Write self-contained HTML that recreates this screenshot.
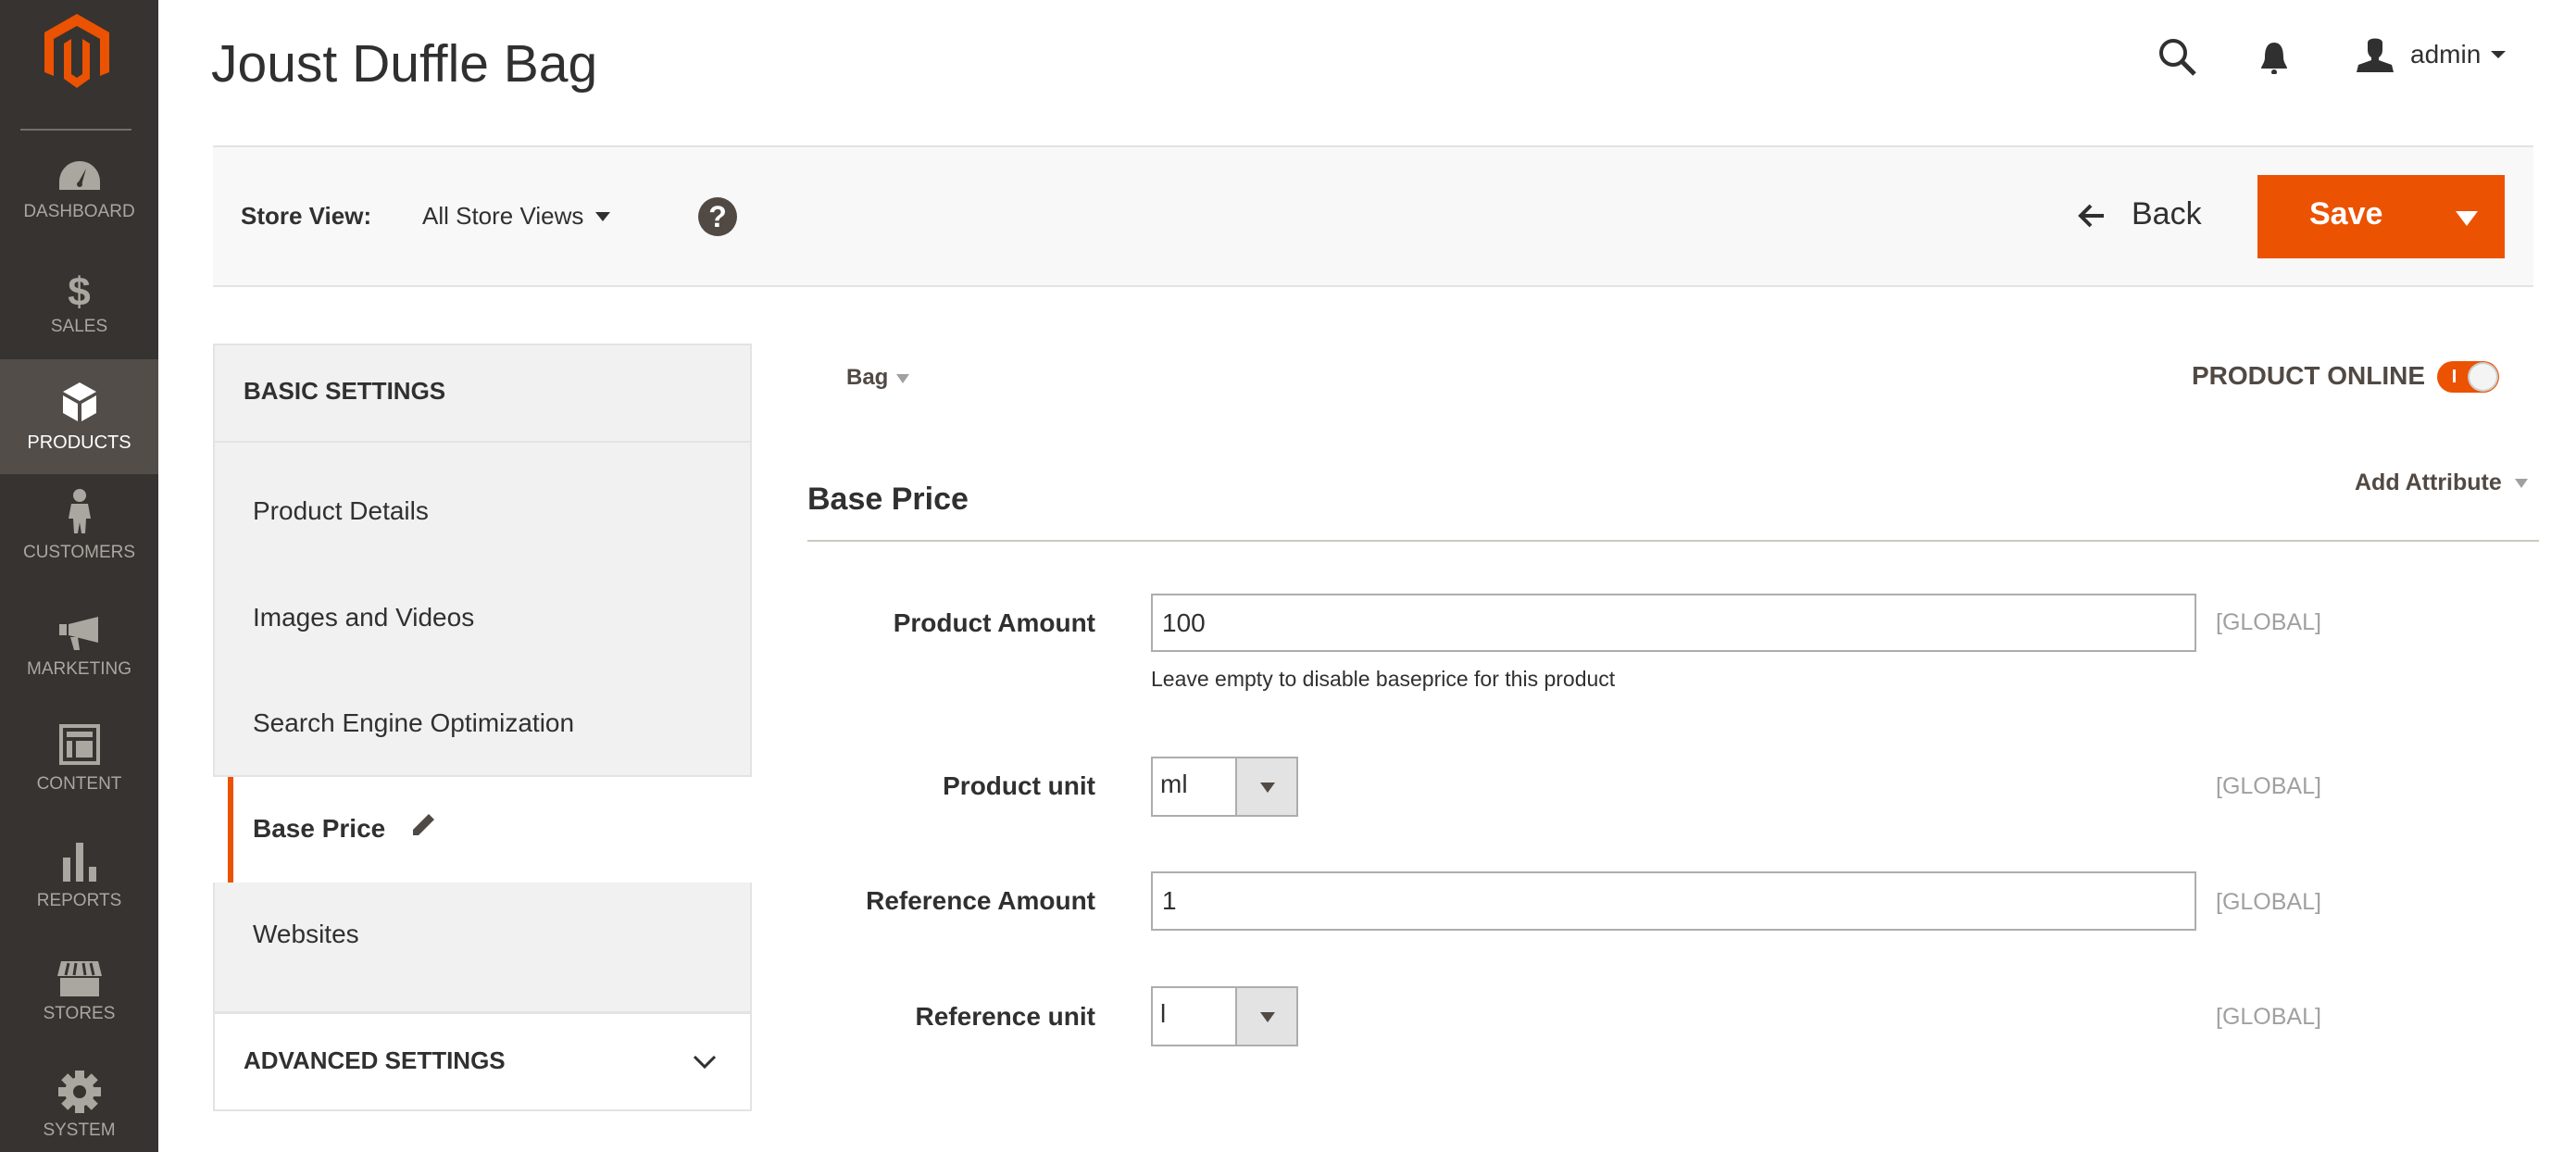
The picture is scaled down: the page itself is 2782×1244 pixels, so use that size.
<!DOCTYPE html>
<html><head><meta charset="utf-8"><style>
*{margin:0;padding:0;box-sizing:border-box}
body{width:2782px;height:1244px;background:#fff;font-family:"Liberation Sans",sans-serif;color:#303030;position:relative;overflow:hidden}
.a{position:absolute;white-space:nowrap}
#side{position:absolute;left:0;top:0;width:171px;height:1244px;background:#373330}
.nav{position:absolute;left:0;width:171px;text-align:center;color:#aaa6a0;font-size:19px}
.nav svg{display:block;margin:0 auto}
.lbl{font-weight:bold;font-size:28px;color:#303030;text-align:right;width:400px}
.inp{position:absolute;border:2px solid #adadad;background:#fff;font-size:28px;color:#303030;padding-left:10px;display:flex;align-items:center}
.glob{color:#a0a0a0;font-size:25px}
.sel{position:absolute;width:159px;height:65px;border:2px solid #adadad;background:#fff}
.sel .v{position:absolute;left:8px;top:12px;font-size:28px}
.sel .b{position:absolute;left:89px;top:0;width:66px;height:61px;background:#e3e3e3;border-left:2px solid #adadad}
.sel .b:after{content:"";position:absolute;left:25px;top:26px;border-left:8px solid transparent;border-right:8px solid transparent;border-top:11px solid #514943}
.item{position:absolute;left:273px;font-size:28px;color:#303030}
</style></head><body>
<div id="side">
<svg class="a" style="left:0;top:0" width="171" height="110" viewBox="0 0 171 110"><path d="M48,35 L83,15 L118,35 L118,78 L108,82 L108,42 L83,28 L58,42 L58,82 L48,78 Z" fill="#eb5202"/><path d="M69,47 L77,42 L77,80 L83,84 L89,80 L89,42 L97,47 L97,85 L83,95 L69,85 Z" fill="#eb5202"/></svg>
<div class="a" style="left:22px;top:139px;width:120px;height:2px;background:#736e69"></div>
<div class="nav" style="top:174px"><svg width="44" height="32" viewBox="0 0 44 32"><path d="M0,31 L0,22 A22,22 0 0 1 44,22 L44,31 Z" fill="#aaa6a0"/><path d="M20,24 L29,8 L24,26 Z" fill="#373330"/><circle cx="22" cy="25" r="3" fill="#373330"/></svg><div style="margin-top:12px">DASHBOARD</div></div>
<div class="nav" style="top:294px"><div style="font-size:44px;font-weight:bold;line-height:44px">$</div><div style="margin-top:4px">SALES</div></div>
<div class="a" style="left:0;top:388px;width:171px;height:124px;background:#524d49"></div>
<div class="nav" style="top:413px;color:#fff"><svg width="36" height="42" viewBox="0 0 36 42"><path d="M18,0 L36,10 L18,20 L0,10 Z M0,14 L16,23 L16,42 L0,33 Z M36,14 L20,23 L20,42 L36,33 Z" fill="#fff"/></svg><div style="margin-top:12px;font-size:20px">PRODUCTS</div></div>
<div class="nav" style="top:528px"><svg width="24" height="48" viewBox="0 0 24 48"><circle cx="12" cy="7" r="7" fill="#aaa6a0"/><path d="M3,16 L21,16 L24,32 L19,32 L18,48 L14,48 L12,36 L10,48 L6,48 L5,32 L0,32 Z" fill="#aaa6a0"/></svg><div style="margin-top:10px">CUSTOMERS</div></div>
<div class="nav" style="top:666px"><svg width="44" height="36" viewBox="0 0 44 36"><path d="M0,8 L8,8 L8,20 L0,20 Z M10,8 L42,0 L42,28 L10,20 Z M12,22 L20,22 L22,36 L16,36 Z" fill="#aaa6a0"/></svg><div style="margin-top:10px">MARKETING</div></div>
<div class="nav" style="top:782px"><svg width="44" height="44" viewBox="0 0 44 44"><path d="M0,0 H44 V44 H0 Z M4,4 V40 H40 V4 Z M8,8 H36 V14 H8 Z M8,18 H14 V36 H8 Z M18,18 H36 V36 H18 Z" fill="#aaa6a0" fill-rule="evenodd"/></svg><div style="margin-top:10px">CONTENT</div></div>
<div class="nav" style="top:910px"><svg width="40" height="42" viewBox="0 0 40 42"><path d="M2,16 H10 V42 H2 Z M16,0 H24 V42 H16 Z M30,26 H38 V42 H30 Z" fill="#aaa6a0"/></svg><div style="margin-top:10px">REPORTS</div></div>
<div class="nav" style="top:1038px"><svg width="48" height="38" viewBox="0 0 48 38"><path d="M4,0 H44 L48,16 H0 Z" fill="#aaa6a0"/><path d="M12,2 L9,15 M20,2 L18,15 M28,2 L30,15 M36,2 L39,15" stroke="#373330" stroke-width="3"/><path d="M3,18 H45 V38 H3 Z" fill="#aaa6a0"/></svg><div style="margin-top:8px">STORES</div></div>
<div class="nav" style="top:1156px"><svg width="46" height="46" viewBox="0 0 46 46"><g fill="#aaa6a0"><circle cx="23" cy="23" r="16"/><rect x="18" y="0" width="10" height="46"/><rect x="0" y="18" width="46" height="10"/><rect x="18" y="0" width="10" height="46" transform="rotate(45 23 23)"/><rect x="18" y="0" width="10" height="46" transform="rotate(-45 23 23)"/></g><circle cx="23" cy="23" r="7" fill="#373330"/></svg><div style="margin-top:8px">SYSTEM</div></div>
</div>

<div class="a" style="left:228px;top:36px;font-size:57px;color:#303030">Joust Duffle Bag</div>
<svg class="a" style="left:2330px;top:40px" width="44" height="44" viewBox="0 0 44 44"><circle cx="17" cy="17" r="13" fill="none" stroke="#303030" stroke-width="4"/><path d="M26,26 L40,40" stroke="#303030" stroke-width="5"/></svg>
<svg class="a" style="left:2440px;top:44px" width="32" height="36" viewBox="0 0 32 36"><path d="M16,2 C8,2 6,10 6,18 C6,24 2,27 2,30 H30 C30,27 26,24 26,18 C26,10 24,2 16,2 Z" fill="#303030"/><circle cx="16" cy="34" r="3" fill="#303030"/></svg>
<svg class="a" style="left:2545px;top:40px" width="40" height="38" viewBox="0 0 40 38"><path d="M12,6 C12,0 28,0 28,6 L28,14 C28,20 24,22 24,22 L24,25 L38,30 L40,38 H0 L2,30 L16,25 L16,22 C16,22 12,20 12,14 Z" fill="#303030"/></svg>
<div class="a" style="left:2603px;top:43px;font-size:28px;color:#303030">admin</div>
<div class="a" style="left:2690px;top:55px;border-left:8px solid transparent;border-right:8px solid transparent;border-top:8px solid #303030"></div>

<div class="a" style="left:230px;top:157px;width:2506px;height:153px;background:#f8f8f8;border-top:2px solid #e3e3e3;border-bottom:2px solid #e3e3e3"></div>
<div class="a" style="left:260px;top:218px;font-size:26px;font-weight:bold;color:#303030">Store View:</div>
<div class="a" style="left:456px;top:218px;font-size:26px;color:#303030">All Store Views</div>
<div class="a" style="left:643px;top:229px;border-left:8px solid transparent;border-right:8px solid transparent;border-top:10px solid #303030"></div>
<div class="a" style="left:754px;top:213px;width:42px;height:42px;border-radius:50%;background:#514943;color:#fff;font-weight:bold;font-size:32px;text-align:center;line-height:42px">?</div>
<svg class="a" style="left:2244px;top:220px" width="30" height="26" viewBox="0 0 30 26"><path d="M28,13 H4 M14,2 L3,13 L14,24" fill="none" stroke="#303030" stroke-width="4"/></svg>
<div class="a" style="left:2302px;top:212px;font-size:34px;color:#303030">Back</div>
<div class="a" style="left:2438px;top:189px;width:267px;height:90px;background:#eb5202"></div>
<div class="a" style="left:2494px;top:212px;font-size:34px;font-weight:bold;color:#fff">Save</div>
<div class="a" style="left:2652px;top:228px;border-left:12px solid transparent;border-right:12px solid transparent;border-top:16px solid #fff"></div>

<div class="a" style="left:230px;top:371px;width:582px;height:468px;background:#f1f1f1;border:2px solid #e3e3e3"></div>
<div class="a" style="left:230px;top:476px;width:582px;height:2px;background:#e3e3e3"></div>
<div class="a" style="left:263px;top:407px;font-size:26px;font-weight:bold;color:#303030">BASIC SETTINGS</div>
<div class="item" style="top:536px">Product Details</div>
<div class="item" style="top:651px">Images and Videos</div>
<div class="item" style="top:765px">Search Engine Optimization</div>
<div class="a" style="left:246px;top:839px;width:6px;height:114px;background:#eb5202"></div>
<div class="item" style="top:879px;font-weight:bold">Base Price</div>
<svg class="a" style="left:443px;top:877px" width="28" height="28" viewBox="0 0 28 28"><path d="M20,2 L26,8 L9,25 L3,25 L3,19 Z" fill="#514943"/></svg>
<div class="a" style="left:230px;top:953px;width:582px;height:141px;background:#f1f1f1;border:2px solid #e3e3e3;border-top:none"></div>
<div class="item" style="top:993px">Websites</div>
<div class="a" style="left:230px;top:1093px;width:582px;height:107px;background:#fff;border:2px solid #e3e3e3"></div>
<div class="a" style="left:263px;top:1130px;font-size:26px;font-weight:bold;color:#303030">ADVANCED SETTINGS</div>
<svg class="a" style="left:748px;top:1138px" width="26" height="18" viewBox="0 0 26 18"><path d="M2,3 L13,14 L24,3" fill="none" stroke="#303030" stroke-width="3"/></svg>

<div class="a" style="left:914px;top:394px;font-size:24px;font-weight:bold;color:#514943">Bag</div>
<div class="a" style="left:968px;top:404px;border-left:7px solid transparent;border-right:7px solid transparent;border-top:10px solid #a0a0a0"></div>
<div class="a" style="left:2367px;top:390px;font-size:28px;color:#514943;font-weight:bold">PRODUCT ONLINE</div>
<div class="a" style="left:2632px;top:390px;width:67px;height:34px;border-radius:17px;background:#eb5202"></div>
<div class="a" style="left:2649px;top:399px;width:3px;height:14px;background:#fff"></div>
<div class="a" style="left:2665px;top:391px;width:33px;height:32px;border-radius:50%;background:#f4f4f4;border:2px solid #ccc"></div>
<div class="a" style="left:872px;top:520px;font-size:34px;font-weight:bold;color:#303030">Base Price</div>
<div class="a" style="left:2543px;top:507px;font-size:25px;font-weight:bold;color:#514943">Add Attribute</div>
<div class="a" style="left:2716px;top:517px;border-left:7px solid transparent;border-right:7px solid transparent;border-top:10px solid #a0a0a0"></div>
<div class="a" style="left:872px;top:583px;width:1870px;height:2px;background:#cac8c0"></div>

<div class="a lbl" style="left:783px;top:657px">Product Amount</div>
<div class="inp" style="left:1243px;top:641px;width:1129px;height:63px">100</div>
<div class="a" style="left:1243px;top:720px;font-size:23px;color:#303030">Leave empty to disable baseprice for this product</div>
<div class="a glob" style="left:2393px;top:658px">[GLOBAL]</div>

<div class="a lbl" style="left:783px;top:833px">Product unit</div>
<div class="sel" style="left:1243px;top:817px"><span class="v">ml</span><span class="b"></span></div>
<div class="a glob" style="left:2393px;top:835px">[GLOBAL]</div>

<div class="a lbl" style="left:783px;top:957px">Reference Amount</div>
<div class="inp" style="left:1243px;top:941px;width:1129px;height:64px">1</div>
<div class="a glob" style="left:2393px;top:960px">[GLOBAL]</div>

<div class="a lbl" style="left:783px;top:1082px">Reference unit</div>
<div class="sel" style="left:1243px;top:1065px"><span class="v">l</span><span class="b"></span></div>
<div class="a glob" style="left:2393px;top:1084px">[GLOBAL]</div>
</body></html>
